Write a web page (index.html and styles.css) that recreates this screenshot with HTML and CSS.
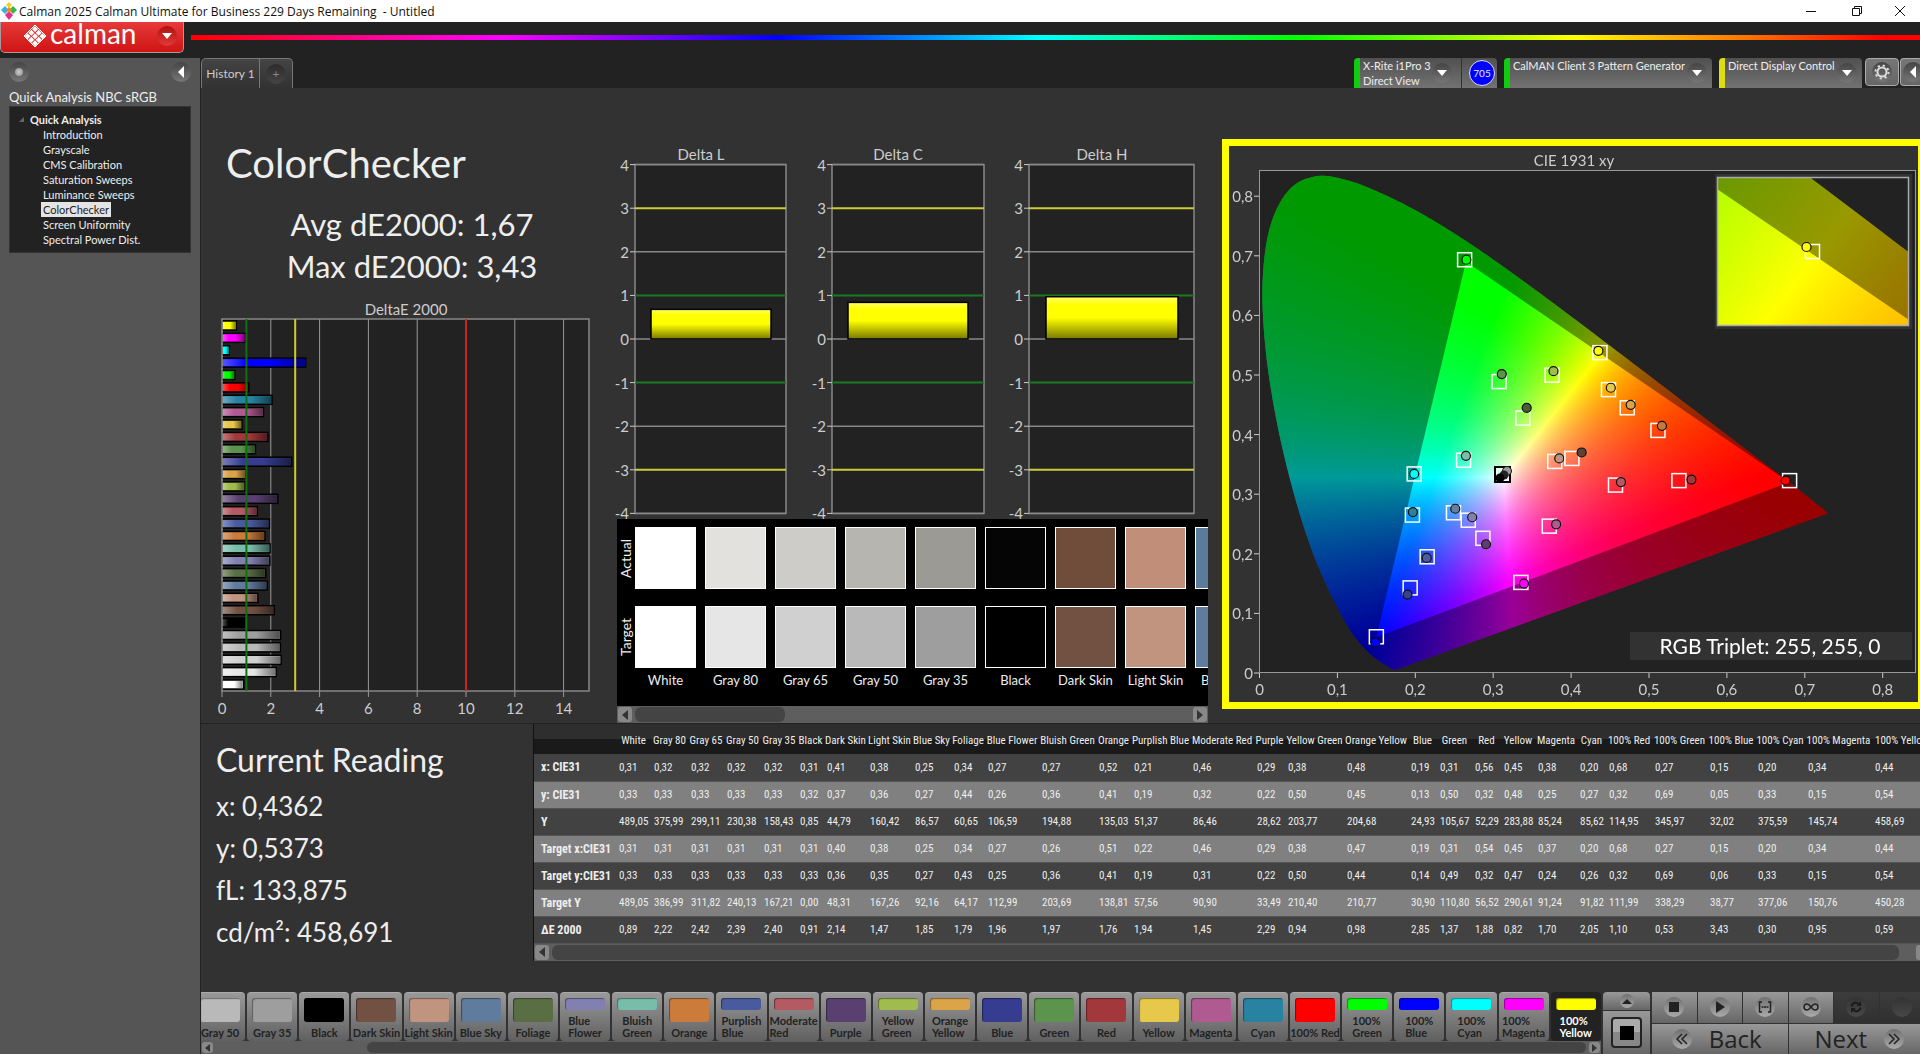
FILE: index.html
```html
<!DOCTYPE html>
<html lang="en">
<head>
  <meta charset="UTF-8">
  <meta name="viewport" content="width=device-width, initial-scale=1.0">
  <title>Calman 2025 Calman Ultimate for Business</title>
  <link rel="stylesheet" href="styles.css">
</head>
<body>
  <header class="titlebar">
    <svg class="app-icon" width="16" height="18" viewBox="0 0 16 18">
      <path d="M8 0l3 3-3 3-3-3z" fill="#f3d21b"/><path d="M4 4l4 4-4 4-4-4z" fill="#2fb4e8"/>
      <path d="M12 4l4 4-4 4-4-4z" fill="#3cb54a"/><path d="M8 9l4 4-4 5-4-5z" fill="#e6308a"/>
      <path d="M8 5l3 3-3 3-3-3z" fill="#f08a20"/>
    </svg>
    <span class="window-title">Calman 2025 Calman Ultimate for Business 229 Days Remaining &nbsp;- Untitled</span>
    <div class="window-buttons">
      <button aria-label="Minimize"><svg width="12" height="12"><path d="M1 6.500h10" stroke="#111" fill="none"/></svg></button>
      <button aria-label="Restore"><svg width="12" height="12"><path d="M1.500 3.500h7v7h-7zM3.500 3.500v-2h7v7h-2" stroke="#111" fill="none"/></svg></button>
      <button aria-label="Close"><svg width="12" height="12"><path d="M1 1l10 10M11 1L1 11" stroke="#111" fill="none"/></svg></button>
    </div>
  </header>

  <div class="topbar">
    <button class="logo">
      <svg width="24" height="24" viewBox="0 0 24 24">
        <path d="M12 1l11 11-11 11L1 12z" fill="none" stroke="#fff" stroke-width="1"/>
        <g fill="#fff"><path d="M12 2l3 3-3 3-3-3zM8.300 5.700l3 3-3 3-3-3zM15.700 5.700l3 3-3 3-3-3zM4.600 9.200l3 3-3 3-3-3zM12 9.200l3 3-3 3-3-3zM19.400 9.200l3 3-3 3-3-3zM8.300 12.800l3 3-3 3-3-3zM15.700 12.800l3 3-3 3-3-3zM12 16.300l3 3-3 3-3-3z"/></g>
      </svg>
      <span>calman</span>
      <i class="round round-red"><svg width="10" height="6"><path d="M0 0h10L5 6z" fill="#fff"/></svg></i>
    </button>
    <div class="rainbow"></div>
  </div>

  <div class="body">
    <aside class="sidebar">
      <div class="sidebar-top">
        <button class="round" aria-label="Record"><i class="led"></i></button>
        <button class="round" aria-label="Collapse"><svg width="6" height="12"><path d="M6 0v12L0 6z" fill="#fff"/></svg></button>
      </div>
      <h2>Quick Analysis NBC sRGB</h2>
      <nav class="tree">
        <strong><svg width="5" height="5"><path d="M5 0v5H0z" fill="#666"/></svg>Quick Analysis</strong>
        <ul>
          <li><a href="#">Introduction</a></li>
          <li><a href="#">Grayscale</a></li>
          <li><a href="#">CMS Calibration</a></li>
          <li><a href="#">Saturation Sweeps</a></li>
          <li><a href="#">Luminance Sweeps</a></li>
          <li><a href="#" class="active">ColorChecker</a></li>
          <li><a href="#">Screen Uniformity</a></li>
          <li><a href="#">Spectral Power Dist.</a></li>
        </ul>
      </nav>
    </aside>

    <main>
      <div class="tabs">
        <div class="tab-group">
          <button class="tab">History 1</button>
          <button class="tab tab-add" aria-label="Add history"><i class="round round-dark">+</i></button>
        </div>
        <div class="devices">
          <div class="device device-green">
            <button class="device-meter"><span>X-Rite i1Pro 3<br>Direct View</span><i class="round"><svg width="10" height="6"><path d="M0 0h10L5 6z" fill="#fff"/></svg></i></button>
            <b class="badge">705</b>
          </div>
          <div class="device device-green">
            <button class="device-source"><span>CalMAN Client 3 Pattern Generator</span><i class="round"><svg width="10" height="6"><path d="M0 0h10L5 6z" fill="#fff"/></svg></i></button>
          </div>
          <div class="device device-yellow">
            <button class="device-display"><span>Direct Display Control</span><i class="round"><svg width="10" height="6"><path d="M0 0h10L5 6z" fill="#fff"/></svg></i></button>
          </div>
          <div class="device-tools">
            <button class="tool" aria-label="Settings"><i class="round"><svg width="16" height="16" viewBox="0 0 16 16"><circle cx="8" cy="8" r="4.500" fill="none" stroke="#ddd" stroke-width="2"/><circle cx="8" cy="8" r="6.500" fill="none" stroke="#ddd" stroke-width="2" stroke-dasharray="2.100 3"/></svg></i></button>
            <button class="tool tool-cut" aria-label="Collapse"><i class="round"><svg width="6" height="12"><path d="M6 0v12L0 6z" fill="#fff"/></svg></i></button>
          </div>
        </div>
      </div>

      <section class="upper">
        <div class="summary">
          <h1>ColorChecker</h1>
          <p>Avg dE2000: 1,67</p>
          <p>Max dE2000: 3,43</p>
          <svg id="delta-e" class="chart" viewBox="0 0 416 420"></svg>
        </div>

        <div class="middle">
          <svg id="delta-lch" class="chart" viewBox="0 0 591 375"></svg>
          <div class="compare">
            <div class="compare-side"><span>Actual</span><span>Target</span></div>
            <div id="patches" class="patches"></div>
          </div>
          <div class="scrollbar">
            <button aria-label="Scroll left"><svg width="6" height="10"><path d="M6 0v10L0 5z"/></svg></button>
            <div class="track"><div class="thumb" style="width: 27%"></div></div>
            <button aria-label="Scroll right"><svg width="6" height="10"><path d="M0 0v10l6-5z"/></svg></button>
          </div>
        </div>

        <div class="cie">
          <canvas id="cie-fill" width="689" height="556"></canvas>
          <svg id="cie-axes" viewBox="0 0 689 556"></svg>
        </div>
      </section>

      <section class="lower">
        <div class="reading">
          <h2>Current Reading</h2>
          <p>x: 0,4362</p>
          <p>y: 0,5373</p>
          <p>fL: 133,875</p>
          <p>cd/m²: 458,691</p>
        </div>
        <div class="results">
          <div class="table-wrap"><table id="results"></table></div>
          <div class="scrollbar">
            <button aria-label="Scroll left"><svg width="6" height="10"><path d="M6 0v10L0 5z"/></svg></button>
            <div class="track"><div class="thumb" style="width: 99%"></div></div>
            <button aria-label="Scroll right"><svg width="6" height="10"><path d="M0 0v10l6-5z"/></svg></button>
          </div>
        </div>
      </section>

      <footer class="bottom">
        <div class="strip">
          <div id="pattern-buttons" class="pattern-buttons"></div>
          <div class="scrollbar">
            <button aria-label="Scroll left"><svg width="5" height="8"><path d="M5 0v8L0 4z"/></svg></button>
            <div class="track"><div class="thumb thumb-end" style="width: 89%"></div></div>
            <button aria-label="Scroll right"><svg width="5" height="8"><path d="M0 0v8l5-4z"/></svg></button>
          </div>
        </div>
        <div class="window-pattern">
          <button class="up" aria-label="Expand"><i class="round"><svg width="10" height="5"><path d="M0 5h10L5 0z" fill="#222"/></svg></i></button>
          <button class="pattern-size" aria-label="Pattern window"><i></i></button>
        </div>
        <div class="transport">
          <div class="transport-row">
            <button aria-label="Stop"><i class="round"><svg width="10" height="10"><path d="M0 0h10v10H0z" fill="#222"/></svg></i></button>
            <button aria-label="Play"><i class="round"><svg width="10" height="12"><path d="M1 0l9 6-9 6z" fill="#222"/></svg></i></button>
            <button aria-label="Read series"><i class="round"><svg width="14" height="12" viewBox="0 0 14 12"><path d="M4 1H1.500v10H4M10 1h2.500v10H10M3.500 6h2M6 6h2M8.500 6h2" fill="none" stroke="#222" stroke-width="1.500"/></svg></i></button>
            <button aria-label="Continuous"><i class="round"><svg width="16" height="8" viewBox="0 0 16 8"><path d="M8 4C6.500 2 5.500 1 4 1a3 3 0 0 0 0 6c1.500 0 2.500-1 4-3s2.500-3 4-3a3 3 0 0 1 0 6c-1.500 0-2.500-1-4-3z" fill="none" stroke="#222" stroke-width="1.500"/></svg></i></button>
            <button class="off" aria-label="Refresh"><i class="round"><svg width="12" height="12" viewBox="0 0 12 12"><path d="M1.500 5.500C2 2 6.500.500 9 3.500M10.500 6.500c-.500 3.500-5 5-7.500 2" fill="none" stroke="#1c1c1c" stroke-width="2"/><path d="M11 0v5H6.500zM1 12V7h4.500z" fill="#1c1c1c"/></svg></i></button>
            <button class="off" aria-label="Blank"><i class="round"></i></button>
          </div>
          <div class="transport-nav">
            <button class="back"><i class="round"><svg width="12" height="12"><path d="M6 1L1 6l5 5M11 1L6 6l5 5" fill="none" stroke="#222" stroke-width="1.500"/></svg></i>Back</button>
            <button class="next">Next<i class="round"><svg width="12" height="12"><path d="M1 1l5 5-5 5M6 1l5 5-5 5" fill="none" stroke="#222" stroke-width="1.500"/></svg></i></button>
          </div>
        </div>
      </footer>
    </main>
  </div>
  <script src="app.js"></script>
</body>
</html>
```
FILE: styles.css
```css
* {
  margin: 0;
  padding: 0;
  box-sizing: border-box;
}

body {
  display: flex;
  flex-direction: column;
  height: 100vh;
  overflow: hidden;
  background-color: #222;
  color: #eee;
  font-family: Lato, Carlito, "Liberation Sans", sans-serif;
  font-size: 13px;
}

button {
  border: none;
  background: none;
  color: inherit;
  font-family: inherit;
  cursor: pointer;
}

svg {
  display: block;
}

/* Title bar */
.titlebar {
  display: flex;
  align-items: center;
  flex: none;
  height: 22px;
  padding-left: 1px;
  background-color: #fff;
  color: #111;
  font-family: "Open Sans", "Noto Sans", sans-serif;
  font-size: 12px;
}

.window-title {
  margin-left: 2px;
}

.window-buttons {
  display: flex;
  margin-left: auto;
}

.window-buttons button {
  display: flex;
  justify-content: center;
  width: 46px;
}

.window-buttons button:last-child {
  width: 40px;
}

/* Logo and colour line */
.topbar {
  display: flex;
  align-items: center;
  flex: none;
  height: 36px;
  padding-bottom: 5px;
}

.logo {
  display: flex;
  align-items: center;
  width: 184px;
  height: 31px;
  padding: 0 6px 3px 22px;
  border: 1px solid #a99;
  border-top: none;
  border-radius: 0 0 5px 5px;
  background: linear-gradient(#e63a3a, #d01414);
  color: #fff;
  font-size: 28px;
  line-height: 27px;
}

.logo span {
  margin-left: 3px;
  padding-bottom: 4px;
}

.logo .round {
  margin-left: auto;
}

.rainbow {
  flex: 1;
  height: 5px;
  margin-left: 7px;
  background: linear-gradient(to right, #f00, #f0f 18%, #00f 34%, #0ff 49%, #0f0 64%, #ff0 80%, #f00 98%);
}

.round {
  display: flex;
  align-items: center;
  justify-content: center;
  flex: none;
  width: 20px;
  height: 20px;
  border-radius: 50%;
  background: linear-gradient(#444, #777);
  font-style: normal;
}

.round-red {
  background: linear-gradient(#b01010, #e23a3a);
}

.round-dark {
  background: linear-gradient(#2c2c2c, #444);
  color: #888;
}

.body {
  display: flex;
  flex: 1;
  min-height: 0;
}

/* Sidebar */
.sidebar {
  flex: none;
  width: 201px;
  padding: 4px 9px;
  border-right: 1px solid #222;
  background-color: #555;
}

.sidebar-top {
  display: flex;
  justify-content: space-between;
  height: 27px;
}

.led {
  width: 8px;
  height: 8px;
  border-radius: 50%;
  background: radial-gradient(#ccc, #888);
}

.sidebar h2 {
  font-size: 13px;
  font-weight: normal;
  line-height: 17px;
  white-space: nowrap;
}

.tree {
  height: 147px;
  padding: 5px 0 0 9px;
  border: 1px solid #333;
  background-color: #222;
  font-size: 11px;
  line-height: 15px;
}

.tree strong {
  display: flex;
  align-items: center;
  gap: 6px;
}

.tree ul {
  padding-left: 22px;
  list-style: none;
}

.tree a {
  padding: 0 2px;
  color: #eee;
  text-decoration: none;
}

.tree a.active {
  display: inline-block;
  background-color: #e4e4e4;
  color: #222;
}

/* Tabs row */
main {
  display: flex;
  flex-direction: column;
  flex: 1;
  min-width: 0;
  background-color: #323232;
}

.tabs {
  display: flex;
  justify-content: space-between;
  flex: none;
  height: 30px;
  overflow: hidden;
  background-color: #222;
}

.tab-group {
  display: flex;
  border: 1px solid #777;
  border-bottom: none;
  border-radius: 5px 5px 0 0;
  background: linear-gradient(#444, #323232);
}

.tab {
  width: 57px;
  color: #ccc;
  font-size: 12px;
}

.tab-add {
  display: flex;
  align-items: center;
  justify-content: center;
  width: 33px;
  border-left: 1px solid #777;
}

.devices {
  display: flex;
  gap: 7px;
  font-size: 12px;
}

.device {
  display: flex;
  border-left: 6px solid #1c1;
  border-radius: 4px 4px 0 0;
  background: linear-gradient(#505050, #727272);
}

.device-yellow {
  border-left-color: #dd1;
}

.device button {
  display: flex;
  align-items: center;
  justify-content: space-between;
  padding: 0 5px 0 3px;
  font-size: 11px;
  line-height: 15px;
  text-align: left;
  white-space: nowrap;
}

.device button span {
  align-self: flex-start;
}

.device .device-meter {
  width: 102px;
  padding-right: 9px;
  border-right: 1px solid #333;
}

.device .device-source {
  width: 202px;
}

.device .device-display {
  width: 137px;
}

.badge {
  width: 26px;
  height: 26px;
  margin: 2px 2px 0 7px;
  border: 1px solid #ddf;
  border-radius: 50%;
  background-color: #00f;
  font-size: 10px;
  font-weight: normal;
  line-height: 24px;
  text-align: center;
}

.device-tools {
  display: flex;
  gap: 1px;
  margin-left: -4px;
}

.tool {
  display: flex;
  align-items: center;
  justify-content: center;
  width: 34px;
  height: 28px;
  border: 1px solid #aaa;
  border-radius: 4px;
  background: linear-gradient(#777, #666);
}

.tool-cut {
  justify-content: flex-start;
  width: 20px;
  padding-left: 2px;
  border-right: none;
  border-radius: 4px 0 0 4px;
}

/* Charts */
.upper {
  display: grid;
  grid-template-columns: minmax(0, 416fr) minmax(0, 591fr) 14px minmax(0, 698fr);
  align-items: start;
  border-bottom: 1px solid #222;
}

.chart {
  width: 100%;
  overflow: visible;
}

svg text {
  fill: #ccc;
  font-size: 15px;
}

.summary {
  padding-top: 51px;
}

.summary h1 {
  margin-bottom: 16px;
  padding-left: 25px;
  font-size: 40px;
  font-weight: normal;
  line-height: 48px;
}

.summary p {
  padding-left: 6px;
  font-size: 31px;
  line-height: 42px;
  text-align: center;
}

.summary .chart {
  margin-top: 13px;
}

.middle {
  padding-top: 56px;
}

.compare {
  display: flex;
  height: 187px;
  background-color: #000;
}

.compare-side {
  display: flex;
  flex-direction: column;
  gap: 17px;
  flex: none;
  width: 18px;
  padding-top: 8px;
}

.compare-side span {
  height: 62px;
  font-size: 14px;
  line-height: 18px;
  text-align: center;
  writing-mode: vertical-rl;
  transform: rotate(180deg);
}

.patches {
  display: flex;
  gap: 9px;
  overflow: hidden;
  padding-top: 8px;
}

.patch {
  flex: none;
  width: 61px;
  text-align: center;
  font-size: 13px;
  line-height: 24px;
  white-space: nowrap;
}

.patch i {
  display: block;
  height: 62px;
  border: 1px solid #fff;
}

.patch i + i {
  margin-top: 17px;
}

.scrollbar {
  display: flex;
  gap: 3px;
  height: 17px;
  padding: 1px;
  background-color: #5e5e5e;
}

.scrollbar button {
  display: flex;
  align-items: center;
  justify-content: center;
  width: 14px;
  border-radius: 3px;
  background-color: #888;
}

.scrollbar path {
  fill: #333;
}

.track {
  flex: 1;
}

.thumb {
  height: 100%;
  border-radius: 6px;
  background-color: #444;
}

.thumb-end {
  margin-left: auto;
}

.cie {
  display: grid;
  grid-column: 4;
  margin-top: 51px;
  border: 7px solid #ff0;
  border-right-width: 2px;
}

.cie canvas,
.cie svg {
  grid-area: 1 / 1;
  width: 100%;
}

.cie .triplet {
  fill: #fff;
  font-size: 21px;
}

/* Reading and results */
.lower {
  display: flex;
}

.reading {
  flex: none;
  width: 332px;
  padding: 15px 0 0 15px;
  font-size: 26px;
  line-height: 42px;
}

.reading h2 {
  margin-bottom: 4px;
  font-size: 32px;
  font-weight: normal;
}

.results {
  flex: 1;
  min-width: 0;
  overflow: hidden;
  border-left: 1px solid #111;
}

.results .scrollbar {
  margin-right: -11px;
}

.table-wrap {
  overflow: hidden;
}

#results {
  table-layout: fixed;
  width: 0;
  border-collapse: collapse;
  font-family: "Roboto Condensed", Lato, sans-serif;
  font-size: 11px;
  white-space: nowrap;
}

#results th,
#results td {
  height: 27px;
  padding-left: 3px;
  font-weight: normal;
  text-align: left;
}

#results thead th {
  height: 30px;
  padding: 3px 0 0;
  text-align: center;
}

#results thead tr {
  background: linear-gradient(#2e2e2e 50%, #1a1a1a 50%);
}

#results tbody th {
  padding-left: 7px;
  font-size: 12px;
  font-weight: bold;
}

#results tbody tr {
  border-bottom: 1px solid #555;
  background-color: #424242;
}

#results tbody tr:nth-child(even) {
  background-color: #808080;
}

/* Bottom bar */
.bottom {
  display: flex;
  gap: 2px;
  height: 62px;
  margin-top: auto;
  overflow: hidden;
  color: #222;
}

.strip {
  display: flex;
  flex-direction: column;
  flex: 1;
  min-width: 0;
  overflow: hidden;
}

.pattern-buttons {
  display: flex;
  gap: 2px;
  height: 49px;
  margin-left: -6px;
}

.pattern-buttons button {
  display: flex;
  flex-direction: column;
  align-items: center;
  justify-content: space-between;
  flex: 1;
  width: 0;
  padding: 5px 0 2px;
  border-top: 1px solid #aaa;
  border-radius: 4px;
  background: linear-gradient(#999, #606060);
  font-size: 11px;
  font-weight: bold;
  line-height: 12px;
  text-align: left;
  white-space: nowrap;
}

.pattern-buttons i {
  width: 40px;
  height: 24px;
  border-radius: 3px;
  box-shadow: inset 1px 1px 1px rgba(0, 0, 0, 0.4);
}

.pattern-buttons .two-lines i {
  height: 12px;
}

.pattern-buttons .selected {
  border-top-color: #222;
  background: #222;
  color: #fff;
}

.strip .scrollbar {
  height: 13px;
}

.strip .scrollbar button {
  width: 11px;
}

.window-pattern {
  display: flex;
  flex-direction: column;
  gap: 1px;
  width: 47px;
}

.window-pattern button,
.transport button {
  display: flex;
  align-items: center;
  justify-content: center;
  background: linear-gradient(#999, #666);
}

.bottom .round {
  background: linear-gradient(#707070, #aaa);
}

.window-pattern .up {
  height: 18px;
  border-radius: 4px 4px 0 0;
}

.window-pattern .up .round {
  width: 14px;
  height: 14px;
}

.window-pattern .pattern-size {
  flex: 1;
}

.pattern-size i {
  width: 31px;
  height: 31px;
  border: 2px solid #222;
  border-radius: 4px;
  background: linear-gradient(#000, #000) center / 14px 14px no-repeat, linear-gradient(#aaa 50%, #888 50%);
}

.transport {
  display: flex;
  flex-direction: column;
  gap: 1px;
  width: 272px;
  margin-right: -4px;
}

.transport-row,
.transport-nav {
  display: flex;
  gap: 1px;
  flex: 1;
}

.transport-row button {
  flex: 1;
}

.transport-row .off {
  background: linear-gradient(#3c3c3c, #303030);
}

.transport-row .off .round {
  background: linear-gradient(#333, #484848);
}

.transport-nav button {
  flex: 1;
  gap: 17px;
  font-family: "Open Sans", "Noto Sans", sans-serif;
  font-size: 24px;
  line-height: 28px;
}

.transport-nav .back {
  padding-right: 6px;
}

.transport-nav .next {
  padding-left: 6px;
}
```
FILE: app.js
```js
// name, bar colour, measured colour, x, y, Y, target x, target y, target Y, dE, column width
const colors = [
  ['White', '#ffffff', '#ffffff', '0,31', '0,33', '489,05', '0,31', '0,33', '489,05', '0,89', 35],
  ['Gray 80', '#e6e6e6', '#e2e1de', '0,32', '0,33', '375,99', '0,31', '0,33', '386,99', '2,22', 37],
  ['Gray 65', '#d0d0d0', '#cdccc8', '0,32', '0,33', '299,11', '0,31', '0,33', '311,82', '2,42', 36],
  ['Gray 50', '#b9b9b9', '#b6b5b0', '0,32', '0,33', '230,38', '0,31', '0,33', '240,13', '2,39', 37],
  ['Gray 35', '#9e9e9e', '#9b9a95', '0,32', '0,33', '158,43', '0,31', '0,33', '167,21', '2,40', 36],
  ['Black', '#000000', '#050505', '0,31', '0,32', '0,85', '0,31', '0,33', '0,00', '0,91', 27],
  ['Dark Skin', '#725142', '#704d3a', '0,41', '0,37', '44,79', '0,40', '0,36', '48,31', '2,14', 43],
  ['Light Skin', '#c19480', '#c08e79', '0,38', '0,36', '160,42', '0,38', '0,35', '167,26', '1,47', 45],
  ['Blue Sky', '#5f7c9c', '#5a7b9a', '0,25', '0,27', '86,57', '0,25', '0,27', '92,16', '1,85', 39],
  ['Foliage', '#5a6e44', '#5a6e44', '0,34', '0,44', '60,65', '0,34', '0,43', '64,17', '1,79', 34],
  ['Blue Flower', '#8280b0', '#8280b0', '0,27', '0,26', '106,59', '0,27', '0,25', '112,99', '1,96', 54],
  ['Bluish Green', '#78bcaa', '#78bcaa', '0,27', '0,36', '194,88', '0,26', '0,36', '203,69', '1,97', 57],
  ['Orange', '#cc7c3a', '#cc7c3a', '0,52', '0,41', '135,03', '0,51', '0,41', '138,81', '1,76', 35],
  ['Purplish Blue', '#4a5a9e', '#4a5a9e', '0,21', '0,19', '51,37', '0,22', '0,19', '57,56', '1,94', 59],
  ['Moderate Red', '#b45a62', '#b45a62', '0,46', '0,32', '86,46', '0,46', '0,31', '90,90', '1,45', 64],
  ['Purple', '#5a4070', '#5a4070', '0,29', '0,22', '28,62', '0,29', '0,22', '33,49', '2,29', 31],
  ['Yellow Green', '#a0bc4e', '#a0bc4e', '0,38', '0,50', '203,77', '0,38', '0,50', '210,40', '0,94', 59],
  ['Orange Yellow', '#dca448', '#dca448', '0,48', '0,45', '204,68', '0,47', '0,44', '210,77', '0,98', 64],
  ['Blue', '#363c90', '#363c90', '0,19', '0,13', '24,93', '0,19', '0,14', '30,90', '2,85', 29],
  ['Green', '#5c944e', '#5c944e', '0,31', '0,50', '105,67', '0,31', '0,49', '110,80', '1,37', 35],
  ['Red', '#a2383c', '#a2383c', '0,56', '0,32', '52,29', '0,54', '0,32', '56,52', '1,88', 29],
  ['Yellow', '#e8c84a', '#e8c84a', '0,45', '0,48', '283,88', '0,45', '0,47', '290,61', '0,82', 34],
  ['Magenta', '#b05a92', '#b05a92', '0,38', '0,25', '85,24', '0,37', '0,24', '91,24', '1,70', 42],
  ['Cyan', '#2882a2', '#2882a2', '0,20', '0,27', '85,62', '0,20', '0,26', '91,82', '2,05', 29],
  ['100% Red', '#ff0000', '#ff0000', '0,68', '0,32', '114,95', '0,68', '0,32', '111,99', '1,10', 46],
  ['100% Green', '#00ff00', '#00ff00', '0,27', '0,69', '345,97', '0,27', '0,69', '338,29', '0,53', 55],
  ['100% Blue', '#0000ff', '#0000ff', '0,15', '0,05', '32,02', '0,15', '0,06', '38,77', '3,43', 48],
  ['100% Cyan', '#00ffff', '#00ffff', '0,20', '0,33', '375,59', '0,20', '0,33', '377,06', '0,30', 50],
  ['100% Magenta', '#ff00ff', '#ff00ff', '0,34', '0,15', '145,74', '0,34', '0,15', '150,76', '0,95', 67],
  ['100% Yellow', '#ffff00', '#ffff00', '0,44', '0,54', '458,69', '0,44', '0,54', '450,28', '0,59', 60]
];

function line(x1, y1, x2, y2, color, width) {
  return `<line x1="${x1}" y1="${y1}" x2="${x2}" y2="${y2}" stroke="${color}" stroke-width="${width || 1}"/>`;
}

function label(x, y, text, anchor, cls) {
  return `<text x="${x}" y="${y}" text-anchor="${anchor || 'middle'}" class="${cls || ''}">${text}</text>`;
}

// DeltaE 2000 bars
function drawDeltaE() {
  const x0 = 21, top = 19, bottom = 391, unit = 24.4;
  let out = '<defs><linearGradient id="shade"><stop offset="0" stop-color="#fff" stop-opacity=".35"/>' +
    '<stop offset=".3" stop-color="#fff" stop-opacity="0"/><stop offset=".6" stop-color="#000" stop-opacity="0"/>' +
    '<stop offset="1" stop-color="#000" stop-opacity=".5"/></linearGradient></defs>';
  out += `<rect x="${x0}" y="${top}" width="367" height="${bottom - top}" fill="#222"/>`;
  out += label(205, 15, 'DeltaE 2000');
  for (let v = 0; v < 15; v += 2) {
    const x = x0 + v * unit;
    out += line(x, top, x, bottom + 6, '#999');
    out += label(x, bottom + 23, v);
  }
  colors.slice().reverse().forEach((c, i) => {
    const w = parseFloat(c[9].replace(',', '.')) * unit;
    const y = 21 + i * 12.38;
    out += `<rect x="${x0}" y="${y}" width="${w}" height="9" fill="${c[1]}" stroke="#000" stroke-width="1.500"/>`;
    out += `<rect x="${x0}" y="${y + 1}" width="${w - 1}" height="7" fill="url(#shade)"/>`;
  });
  out += `<rect x="${x0}" y="${top}" width="367" height="${bottom - top}" fill="none" stroke="#888" stroke-width="1.500"/>`;
  out += line(x0 + unit, top, x0 + unit, bottom, '#107010', 2);
  out += line(x0 + 3 * unit, top, x0 + 3 * unit, bottom, '#cc3', 2);
  out += line(x0 + 10 * unit, top, x0 + 10 * unit, bottom, '#c22', 2);
  document.getElementById('delta-e').innerHTML = out;
}

// Delta L, C and H share one axis
function drawDeltaLCH() {
  const unit = 43.6, zero = 195;
  const charts = [
    { name: 'Delta L', title: 84, x: 18, w: 151, bar: 34, barW: 120, v: 0.68 },
    { name: 'Delta C', title: 281, x: 215, w: 152, bar: 231, barW: 120, v: 0.84 },
    { name: 'Delta H', title: 485, x: 412, w: 165, bar: 429, barW: 132, v: 0.97 }
  ];
  let out = '<defs><linearGradient id="yellow" x2="0" y2="1"><stop offset="0" stop-color="#ff6"/>' +
    '<stop offset=".2" stop-color="#ff0"/><stop offset=".5" stop-color="#ff0"/><stop offset="1" stop-color="#770"/></linearGradient></defs>';
  charts.forEach(c => {
    out += `<rect x="${c.x}" y="${zero - 4 * unit}" width="${c.w}" height="${8 * unit}" fill="#222" stroke="#888" stroke-width="1.500"/>`;
    out += label(c.title, 16, c.name);
    for (let v = -4; v <= 4; v++) {
      const y = zero - v * unit;
      const color = Math.abs(v) === 3 ? '#cc3' : Math.abs(v) === 1 ? '#1a7a22' : '#888';
      out += line(c.x - 5, y, c.x, y, '#ccc');
      out += line(c.x, y, c.x + c.w, y, color, color === '#888' ? 1.5 : 2);
      out += label(c.x - 6, y + 6, v, 'end');
    }
    out += `<rect x="${c.bar}" y="${zero - c.v * unit}" width="${c.barW}" height="${c.v * unit}" fill="url(#yellow)" stroke="#000" stroke-width="1.500"/>`;
  });
  document.getElementById('delta-lch').innerHTML = out;
}

// CIE diagram
const locus = [
  [.1741, .005], [.1644, .0109], [.144, .0297], [.1241, .0578], [.1096, .0868], [.0913, .1327], [.0687, .2007], [.0454, .295],
  [.0235, .4127], [.0082, .5384], [.0039, .6548], [.0139, .7502], [.0389, .812], [.0743, .8338], [.1142, .8262],
  [.1547, .8059], [.1929, .7816], [.2296, .7543], [.2658, .7243], [.3016, .6923], [.3373, .6589], [.3731, .6245],
  [.4441, .5547], [.5125, .4866], [.5752, .4242], [.627, .3725], [.6658, .334], [.6915, .3083], [.73, .268]
];
const gamut = [[.68, .32], [.265, .69], [.15, .06]];

// target x, target y, measured x, measured y, colour
const points = [
  [.2633, .6934, .2656, .6934, '#0f0'], [.437, .5375, .435, .5406, '#ff0'], [.3075, .489, .311, .5016, '#5c944e'],
  [.3756, .4997, .3774, .5065, '#a0bc4e'], [.448, .4755, .451, .4786, '#e8c84a'], [.472, .445, .4765, .45, '#dca448'],
  [.5115, .407, .5166, .4147, '#c87a3c'], [.338, .4277, .343, .445, '#4a6034'], [.262, .357, .265, .3644, '#80bcac'],
  [.1986, .334, .1986, .334, '#0ff'], [.379, .355, .3848, .36, '#bc9480'], [.401, .36, .4135, .37, '#5e4236'],
  [.457, .3153, .464, .3203, '#b45a62'], [.5384, .3228, .5544, .3246, '#a0383c'], [.6805, .3228, .6754, .3228, '#f00'],
  [.1963, .265, .1969, .27, '#2882a0'], [.249, .2688, .2513, .2756, '#6480a0'], [.268, .2564, .273, .2613, '#8280b0'],
  [.2868, .226, .2908, .216, '#5c406c'], [.372, .2464, .3808, .2495, '#b05a92'], [.2152, .195, .2146, .193, '#4c5ea0'],
  [.1934, .1428, .19, .1316, '#384090'], [.3355, .152, .3395, .15, '#f0f'], [.15, .0608, .1487, .051, '#00f']
];

function xyToRgb(x, y) {
  const X = x / y, Z = (1 - x - y) / y;
  const rgb = [
    3.2405 * X - 1.5371 - 0.4985 * Z,
    -0.9693 * X + 1.876 + 0.0416 * Z,
    0.0556 * X - 0.204 + 1.0572 * Z
  ].map(v => Math.max(0, v));
  const max = Math.max(...rgb);
  return rgb.map(v => 255 * v / max);
}

// Paints the box with the spectral locus (dimmed) and the gamut triangle
function fillDiagram(ctx, box, view) {
  const buffer = document.createElement('canvas');
  buffer.width = box.w;
  buffer.height = box.h;
  const bctx = buffer.getContext('2d');
  const img = bctx.createImageData(box.w, box.h);
  for (let j = 0; j < box.h; j++) {
    for (let i = 0; i < box.w; i++) {
      const x = (box.left + i - view.x0) / view.sx;
      const y = Math.max(0.001, (view.y0 - box.top - j) / view.sy);
      const c = xyToRgb(x, y);
      const k = (j * box.w + i) * 4;
      img.data[k] = c[0];
      img.data[k + 1] = c[1];
      img.data[k + 2] = c[2];
      img.data[k + 3] = 255;
    }
  }
  bctx.putImageData(img, 0, 0);

  function trace(path) {
    ctx.beginPath();
    path.forEach(p => ctx.lineTo(view.x0 + p[0] * view.sx, view.y0 - p[1] * view.sy));
    ctx.closePath();
  }

  ctx.save();
  ctx.beginPath();
  ctx.rect(box.left, box.top, box.w, box.h);
  ctx.clip();
  ctx.save();
  trace(smooth(locus));
  ctx.clip();
  ctx.drawImage(buffer, box.left, box.top);
  ctx.fillStyle = 'rgba(0, 0, 0, 0.4)';
  ctx.fillRect(box.left, box.top, box.w, box.h);
  ctx.restore();
  trace(gamut);
  ctx.clip();
  ctx.drawImage(buffer, box.left, box.top);
  ctx.restore();
}

// Catmull-Rom through the locus samples
function smooth(p) {
  const out = [];
  for (let i = 0; i < p.length - 1; i++) {
    const a = p[Math.max(0, i - 1)], b = p[i], c = p[i + 1], d = p[Math.min(p.length - 1, i + 2)];
    for (let t = 0; t < 1; t += 0.1) {
      out.push([0, 1].map(k => 0.5 * (2 * b[k] + (c[k] - a[k]) * t + (2 * a[k] - 5 * b[k] + 4 * c[k] - d[k]) * t * t +
        (3 * b[k] - a[k] - 3 * c[k] + d[k]) * t * t * t)));
    }
  }
  out.push(p[p.length - 1]);
  return out;
}

function marker(tx, ty, cx, cy, color) {
  return `<rect x="${tx - 7}" y="${ty - 7}" width="14" height="14" fill="none" stroke="#fff" stroke-width="1.500"/>` +
    `<circle cx="${cx}" cy="${cy}" r="4.500" fill="${color}" stroke="#111" stroke-width="1.200"/>`;
}

function drawCie() {
  const view = { x0: 30.5, y0: 527, sx: 779, sy: 596 };
  const ctx = document.getElementById('cie-fill').getContext('2d');
  ctx.fillStyle = '#323232';
  ctx.fillRect(0, 0, 689, 556);
  ctx.fillStyle = '#222';
  ctx.fillRect(30, 24, 656, 503);
  fillDiagram(ctx, { left: 31, top: 25, w: 655, h: 501 }, view);

  // zoomed inset around the current target
  ctx.fillStyle = '#323232';
  ctx.fillRect(486, 28, 197, 155);
  ctx.fillStyle = '#222';
  ctx.fillRect(488, 31, 191, 149);
  fillDiagram(ctx, { left: 488, top: 31, w: 191, h: 149 },
    { x0: 583.5 - .437 * 3895, y0: 105.5 + .5375 * 2980, sx: 3895, sy: 2980 });

  let out = '<rect x="30.500" y="24.500" width="656" height="502" fill="none" stroke="#999"/>';
  out += label(345, 20, 'CIE 1931 xy');
  for (let i = 0; i <= 8; i++) {
    const x = view.x0 + i * 0.1 * view.sx, y = view.y0 - i * 0.1 * view.sy;
    const text = i ? '0,' + i : '0';
    out += line(x, 527, x, 532, '#ccc') + label(x, 549, text);
    out += line(25, y, 30, y, '#ccc') + label(24, y + 6, text, 'end');
  }
  points.forEach(p => {
    out += marker(view.x0 + p[0] * view.sx, view.y0 - p[1] * view.sy, view.x0 + p[2] * view.sx, view.y0 - p[3] * view.sy, p[4]);
  });
  // white point cluster
  out += '<rect x="266" y="321" width="15" height="15" fill="none" stroke="#000" stroke-width="2"/>' +
    '<rect x="268" y="323" width="11" height="11" fill="none" stroke="#fff"/>' +
    '<circle cx="278" cy="325" r="4.500" fill="#999" stroke="#111"/>' +
    '<circle cx="275" cy="329" r="4.500" fill="#222"/><circle cx="271" cy="332" r="4.500" fill="#000"/>';
  out += '<rect x="488.500" y="31.500" width="191" height="148" fill="none" stroke="#aaa" stroke-width="1.500"/>';
  out += marker(583.5, 105.5, 577.5, 101, '#ff0');
  out += '<rect x="401" y="486" width="282" height="28" fill="#323232"/>';
  out += label(541, 508, 'RGB Triplet: 255, 255, 0', 'middle', 'triplet');
  document.getElementById('cie-axes').innerHTML = out;
}

function fillPatches() {
  document.getElementById('patches').innerHTML = colors.slice(0, 9).map(c =>
    `<div class="patch"><i style="background-color: ${c[2]}"></i><i style="background-color: ${c[1]}"></i>${c[0]}</div>`
  ).join('');
}

function fillTable() {
  const rows = ['x: CIE31', 'y: CIE31', 'Y', 'Target x:CIE31', 'Target y:CIE31', 'Target Y', 'ΔE 2000'];
  let out = '<colgroup><col style="width: 82px">' + colors.map(c => `<col style="width: ${c[10]}px">`).join('') + '</colgroup>';
  out += '<thead><tr><th></th>' + colors.map(c => `<th scope="col">${c[0]}</th>`).join('') + '</tr></thead><tbody>';
  rows.forEach((name, i) => {
    out += `<tr><th scope="row">${name}</th>` + colors.map(c => `<td>${c[i + 3]}</td>`).join('') + '</tr>';
  });
  document.getElementById('results').innerHTML = out + '</tbody>';
}

function fillPatternButtons() {
  const twoLines = ['Blue Flower', 'Bluish Green', 'Purplish Blue', 'Moderate Red', 'Yellow Green', 'Orange Yellow',
    '100% Green', '100% Blue', '100% Cyan', '100% Magenta', '100% Yellow'];
  document.getElementById('pattern-buttons').innerHTML = colors.slice(3).map(c => {
    const two = twoLines.includes(c[0]);
    const cls = (two ? 'two-lines' : '') + (c[0] === '100% Yellow' ? ' selected' : '');
    const text = two ? c[0].replace(' ', '<br>') : c[0];
    return `<button class="${cls}"><i style="background-color: ${c[1]}"></i><span>${text}</span></button>`;
  }).join('');
}

drawDeltaE();
drawDeltaLCH();
drawCie();
fillPatches();
fillTable();
fillPatternButtons();
```
